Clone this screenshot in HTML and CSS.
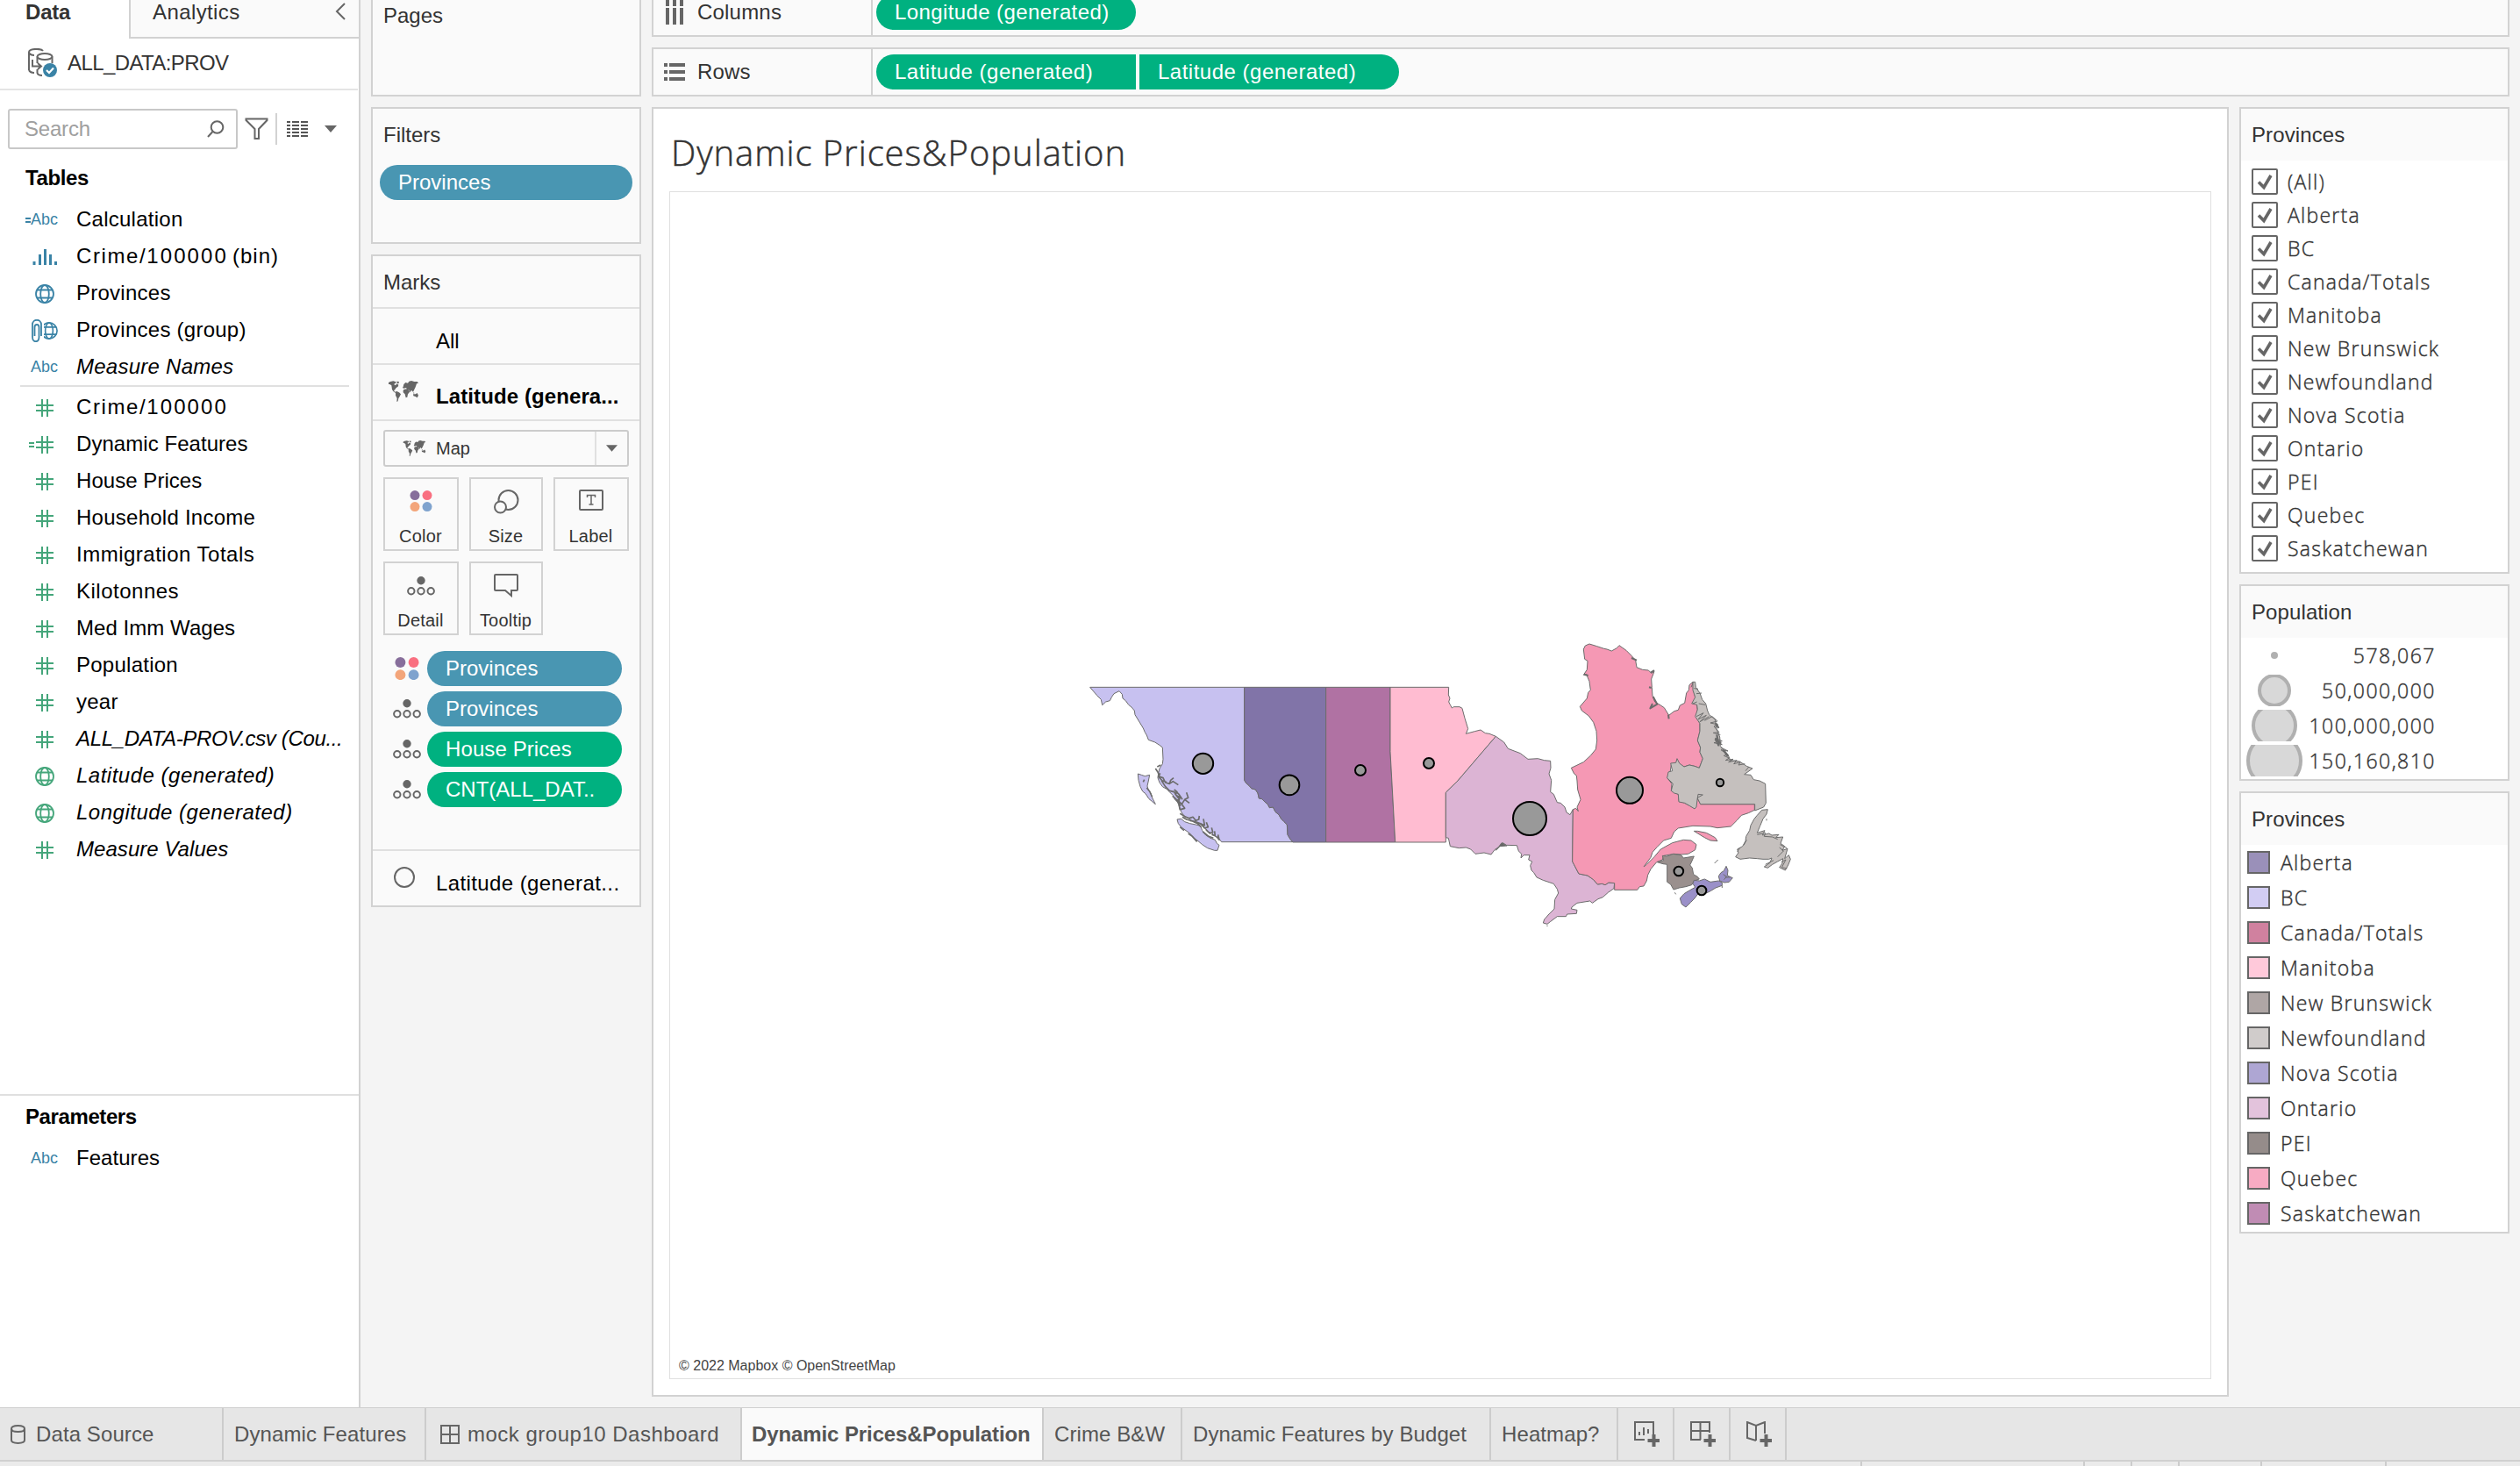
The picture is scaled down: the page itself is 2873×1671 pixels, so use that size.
FILE: index.html
```html
<!DOCTYPE html>
<html lang="en">
<head>
<meta charset="utf-8">
<title>Dynamic Prices&amp;Population</title>
<link rel="stylesheet" href="styles.css">
</head>
<body>
<svg class="defs" width="0" height="0">
  <defs>
    <symbol id="hash" viewBox="0 0 20 20"><path d="M7 0V20M13 0V20M0 7H20M0 13H20" fill="none" stroke="currentColor" stroke-width="2"/></symbol>
    <symbol id="globe" viewBox="0 0 22 22"><g fill="none" stroke="currentColor" stroke-width="1.8"><circle cx="11" cy="11" r="10"/><ellipse cx="11" cy="11" rx="4.8" ry="10"/><path d="M2 6.5H20M2 15.5H20"/></g></symbol>
    <symbol id="dots" viewBox="0 0 26 24"><circle cx="6" cy="5.6" r="5.5" fill="#876e9b"/><circle cx="20" cy="5.6" r="5.5" fill="#f96f80"/><circle cx="6" cy="18.6" r="5.5" fill="#f3a57a"/><circle cx="20" cy="18.6" r="5.5" fill="#7fa3ce"/></symbol>
    <symbol id="detail" viewBox="0 0 32 22"><circle cx="16" cy="4.7" r="4.7" fill="#666"/><g fill="none" stroke="#666" stroke-width="2"><circle cx="4.8" cy="16.8" r="3.7"/><circle cx="16" cy="16.8" r="3.7"/><circle cx="27.2" cy="16.8" r="3.7"/></g></symbol>
    <symbol id="world" viewBox="0 0 102 72"><path fill="#666" d="M0 6 6 3 16 1 26 4 24 8 18 12 24 16 28 10 34 14 32 20 26 24 22 30 18 34 22 38 28 36 36 40 42 46 38 54 34 60 32 70 28 72 29 60 24 50 24 42 16 36 12 30 10 16 4 12 0 12ZM28 2 36 3 34 10 29 8ZM50 20 52 12 58 6 66 8 70 2 78 0 88 3 98 3 102 8 96 10 94 16 92 22 88 30 84 38 78 32 74 40 70 32 64 30 60 24 52 26 48 24ZM52 30 62 28 70 34 72 38 66 46 64 56 59 58 56 46 50 40 50 34ZM84 46 92 46 98 42 102 50 98 58 92 54 85 52ZM84 40 89 42 86 44Z"/></symbol>
    <symbol id="check" viewBox="0 0 30 30"><rect x="1" y="1" width="28" height="28" rx="1" fill="#fff" stroke="#666" stroke-width="2"/><path d="M8 15.5 14 21.5 22 8" fill="none" stroke="#666" stroke-width="3.6"/></symbol>
  </defs>
</svg>
<div class="app">
  <div class="work">
    <aside class="data">
      <div class="tabs"><div class="tab-on">Data</div><div class="tab-off"><span>Analytics</span><svg width="12" height="20" viewBox="0 0 12 20"><path d="M11 1 2 10 11 19" fill="none" stroke="#666" stroke-width="2"/></svg></div></div>
      <div class="source">
        <svg width="34" height="34" viewBox="0 0 34 34"><g fill="none" stroke="#666" stroke-width="2"><ellipse cx="19" cy="9.5" rx="8.5" ry="3.6"/><path d="M27.500 9.500V17M10.500 9.500V17M1 25V4.500C1 0 15 0 17 3M1 5C2 7 5 8 7 8M1 25C2 27 5 28 7 28M5 13V20.500H14M11 17 15 20.500 11 24M10.500 24V28C11 30 13 31 16 31"/></g><circle cx="25" cy="25" r="8" fill="#3a83a6"/><path d="M21 25 24 28 29 22.500" fill="none" stroke="#fff" stroke-width="2.200"/></svg>
        <span>ALL_DATA:PROV</span>
      </div>
      <div class="find">
        <div class="search"><span>Search</span><svg width="20" height="20" viewBox="0 0 20 20"><g fill="none" stroke="#666" stroke-width="2"><circle cx="11.500" cy="8" r="6.800"/><path d="M6.500 13 1 19"/></g></svg></div>
        <svg class="funnel" width="27" height="26" viewBox="0 0 27 26"><path d="M1.500 1.500H25.500V3L16 13V24H11.500V13L1.500 3Z" fill="none" stroke="#666" stroke-width="2"/></svg>
        <i class="bar"></i>
        <svg class="grid" width="24" height="18" viewBox="0 0 24 18"><path d="M0 1H24M0 5H24M0 9H24M0 13H24M0 17H24" stroke="#555" stroke-width="2" stroke-dasharray="4 2 8 2 8 2"/></svg>
        <svg width="14" height="8" viewBox="0 0 14 8"><path d="M0 0H14L7 8Z" fill="#666"/></svg>
      </div>
      <h2>Tables</h2>
      <ul class="fields dim">
        <li><i class="abc"><b></b>Abc</i><span>Calculation</span></li>
        <li><i><svg width="28" height="18" viewBox="0 0 28 18"><path d="M2 14V18M8.500 6V18M14.500 0V18M20.500 6V18M26.500 14V18" stroke="currentColor" stroke-width="3"/></svg></i><span class="slash">Crime/<span class="num">100000</span></span><span class="bin">(bin)</span></li>
        <li><i><svg width="22" height="22"><use href="#globe"/></svg></i><span>Provinces</span></li>
        <li><i class="pair"><svg width="12" height="26" viewBox="0 0 12 26"><path d="M3.500 19V9C3.500 5 8.500 5 8.500 9V20C8.500 27 1 27 1 20V6C1 -1 11 -1 11 6V19" fill="none" stroke="currentColor" stroke-width="1.800"/></svg><svg width="16" height="20" viewBox="4.400 0 17.600 22"><use href="#globe" width="22" height="22"/></svg></i><span>Provinces (group)</span></li>
        <li class="it"><i class="abc">Abc</i><span>Measure Names</span></li>
      </ul>
      <hr>
      <ul class="fields mea">
        <li><i><svg width="20" height="20"><use href="#hash"/></svg></i><span class="slash">Crime/<span class="num">100000</span></span></li>
        <li><i class="pair2"><b></b><svg width="20" height="20"><use href="#hash"/></svg></i><span class="flat">Dynamic Features</span></li>
        <li><i><svg width="20" height="20"><use href="#hash"/></svg></i><span class="flat">House Prices</span></li>
        <li><i><svg width="20" height="20"><use href="#hash"/></svg></i><span>Household Income</span></li>
        <li><i><svg width="20" height="20"><use href="#hash"/></svg></i><span class="open">Immigration Totals</span></li>
        <li><i><svg width="20" height="20"><use href="#hash"/></svg></i><span class="open">Kilotonnes</span></li>
        <li><i><svg width="20" height="20"><use href="#hash"/></svg></i><span class="flat">Med Imm Wages</span></li>
        <li><i><svg width="20" height="20"><use href="#hash"/></svg></i><span>Population</span></li>
        <li><i><svg width="20" height="20"><use href="#hash"/></svg></i><span>year</span></li>
        <li class="it"><i><svg width="20" height="20"><use href="#hash"/></svg></i><span class="tight">ALL_DATA-PROV.csv (Cou...</span></li>
        <li class="it gen"><i><svg width="22" height="22"><use href="#globe"/></svg></i><span>Latitude (generated)</span></li>
        <li class="it gen"><i><svg width="22" height="22"><use href="#globe"/></svg></i><span>Longitude (generated)</span></li>
        <li class="it"><i><svg width="20" height="20"><use href="#hash"/></svg></i><span class="flat">Measure Values</span></li>
      </ul>
      <div class="params">
        <h2>Parameters</h2>
        <ul class="fields dim"><li><i class="abc">Abc</i><span class="flat">Features</span></li></ul>
      </div>
    </aside>

    <section class="cards">
      <div class="card pages"><h3>Pages</h3></div>
      <div class="card filters"><h3>Filters</h3><div class="pill blue">Provinces</div></div>
      <div class="card marks">
        <h3>Marks</h3>
        <div class="layer">All</div>
        <div class="layer on"><svg width="34" height="24"><use href="#world"/></svg><span>Latitude (genera...</span></div>
        <div class="panel">
          <div class="select"><svg width="27" height="18"><use href="#world"/></svg><span>Map</span><i><svg width="13" height="8" viewBox="0 0 14 8"><path d="M0 0H14L7 8Z" fill="#666"/></svg></i></div>
          <div class="buttons">
            <div class="btn"><svg width="26" height="26"><use href="#dots"/></svg>Color</div>
            <div class="btn"><svg width="30" height="28" viewBox="0 0 30 28"><g fill="#fafafa" stroke="#666" stroke-width="2"><circle cx="17.500" cy="12" r="11"/><circle cx="8.500" cy="20" r="6.500"/></g></svg>Size</div>
            <div class="btn"><svg width="28" height="24" viewBox="0 0 28 24"><rect x="1" y="1" width="26" height="22" rx="1" fill="none" stroke="#666" stroke-width="2"/><path d="M9.500 9V6.500H18.500V9M14 6.500V17M11.500 17H16.500" fill="none" stroke="#666" stroke-width="1.500"/></svg>Label</div>
            <div class="btn"><svg class="low" width="32" height="22"><use href="#detail"/></svg>Detail</div>
            <div class="btn"><svg width="28" height="27" viewBox="0 0 28 27"><path d="M2 1H26Q27 1 27 2V18Q27 19 26 19H20V25L13 19H2Q1 19 1 18V2Q1 1 2 1Z" fill="none" stroke="#666" stroke-width="2"/></svg>Tooltip</div>
          </div>
          <div class="enc"><svg width="32" height="26"><use href="#dots"/></svg><div class="pill blue">Provinces</div></div>
          <div class="enc"><svg width="32" height="22"><use href="#detail"/></svg><div class="pill blue">Provinces</div></div>
          <div class="enc"><svg width="32" height="22"><use href="#detail"/></svg><div class="pill green hp">House Prices</div></div>
          <div class="enc"><svg width="32" height="22"><use href="#detail"/></svg><div class="pill green cnt">CNT(ALL_DAT..</div></div>
        </div>
        <div class="layer last"><svg width="24" height="24" viewBox="0 0 24 24"><circle cx="12" cy="12" r="11" fill="none" stroke="#666" stroke-width="2"/></svg><span>Latitude (generat...</span></div>
      </div>
    </section>

    <main>
      <div class="shelf cols">
        <div class="name"><svg width="24" height="28" viewBox="0 0 24 28"><path d="M4 0V7M12 0V7M20 0V7M4 9V28M12 9V28M20 9V28" stroke="#666" stroke-width="4"/></svg>Columns</div>
        <div class="drop"><div class="pill green">Longitude (generated)</div></div>
      </div>
      <div class="shelf rows">
        <div class="name"><svg width="24" height="20" viewBox="0 0 24 20"><path d="M0 2H24M0 10H24M0 18H24" stroke="#666" stroke-width="4" stroke-dasharray="4 2 18 0"/></svg>Rows</div>
        <div class="drop"><div class="pill green lt">Latitude (generated)</div><div class="pill green rt">Latitude (generated)</div></div>
      </div>
      <div class="lower">
        <div class="sheet">
          <h1>Dynamic Prices&amp;Population</h1>
          <div class="frame">
            <svg class="map" width="1756" height="1325" viewBox="0 0 1756 1325">
              <g transform="translate(456 501) scale(.33333)" stroke="#6b6b6b" stroke-width="3" stroke-linejoin="round">
                <path fill="#c7c1f0" d="M68 190H596V508L602 518 612 526 620 536 634 540 642 552 646 570 656 572 666 582 676 590 682 602 694 600 702 616 714 626 722 640 732 650 742 660 744 694 752 708 762 719H518L508 706 496 700 484 688 470 684 462 672 452 660 440 656 424 652 408 640 390 630 380 616 374 600 370 584 358 574 352 560 340 548 330 538 316 530 306 516 300 500 302 484 306 468 316 452 318 436 316 396 306 388 290 378 268 370 262 354 256 344 250 330 222 284 220 270 210 258 200 250 190 236 180 228 178 214 168 203 150 212 142 224 136 236 122 240 110 251 106 232 92 218 80 204Z"/>
                <path fill="#c7c1f0" d="M232 486 244 490 256 494 272 490 268 510 264 528 268 542 276 552 282 570 292 590 280 580 270 572 258 554 248 546 240 530 234 508Z"/>
                <path fill="#c7c1f0" d="M366 642 380 640 392 650 410 656 430 660 446 664 452 680 464 696 480 706 496 712 502 724 510 730 504 748 494 748 470 740 452 728 438 716 424 706 410 690 396 680 380 668 370 656Z"/>
                <path fill="none" stroke-width="5" d="M292 468 300 480 306 496 318 500 326 516 340 520 344 508 354 500M340 520 352 512 370 524M312 508 326 530 340 544 356 548 364 560 376 566 372 580 382 590 392 604 378 608M350 562 362 572 372 590 376 610M382 590 392 574 404 568 398 550M392 574 408 586M384 574 372 556 360 544M376 622 392 632 408 638 420 634 430 646 440 642 442 630M410 646 430 650 446 656 460 662 456 640M446 656 460 672 472 668 466 652M464 676 478 690 488 686 484 670M484 694 496 698 494 682M500 700 510 712 506 694M454 684 474 700 490 706M376 668 390 680M404 690 418 700 434 718M254 506 250 514M262 534 272 546 280 564M308 484 302 496 316 510 330 514M356 540 366 548 360 556 374 574 366 576 378 596M298 462 310 456M384 634 398 642 420 648 436 656 448 668"/>
                <path fill="#8174a8" d="M596 190H875V720H762L752 708 744 694 742 660 732 650 722 640 714 626 702 616 694 600 682 602 676 590 666 582 656 572 646 570 642 552 634 540 620 536 612 526 602 518 596 508Z"/>
                <path fill="#b072a3" d="M875 190H1095V410L1112 720H875Z"/>
                <path fill="#ffbcd1" d="M1095 190H1295L1294 216 1299 228 1295 240 1300 250 1306 261 1312 257H1332L1341 262 1350 296 1361 332 1354 349 1384 341 1404 336 1420 347 1434 349 1456 358 1326 510 1285 550V720H1112L1095 410Z"/>
                <g transform="translate(1230)">
                  <path fill="#dcb4d4" d="M226 358 254 378 268 400 310 416 336 436 370 434 392 440 413 442 414 466 408 486 416 508 413 548 424 556 436 584 448 586 462 600 468 618 480 626 490 608 488 786 510 828 540 834 560 848 574 864 590 862 600 866 612 858 632 860 630 878 610 892 592 908 576 914 556 928 548 921 504 928 486 942 484 948 504 952 502 964 470 966 466 974 436 974 412 992 402 1000 388 996 392 984 408 966 414 960 426 948 428 916 440 894 436 880 424 862 388 850 366 840 356 824 348 816 344 800 350 786 338 780 342 764 322 764 312 774 314 760 304 750 298 731 262 730 250 722 236 736 222 746 210 762 186 756 156 760 140 744 124 738 100 740 70 734 64 706 55 704V550L96 510Z"/>
                  <path fill="#f598b4" d="M526 60 532 48 546 42 572 50 596 58 606 60 622 66 640 56 648 47 672 64 690 82 704 98 708 122 728 130 748 132 758 142 768 136 758 162 760 190 762 220 770 240 790 252 802 260 818 286 836 272 850 268 856 252 872 244 878 210 886 200 888 182 900 172 902 200 908 224 914 250 916 270 912 290 924 314 924 340 916 372 926 396 924 412 934 434 922 466 906 460 888 456 870 462 850 452 826 456 822 482 812 500 828 520 826 544 850 556 852 578 872 586 890 596 906 604 916 570 926 590H1111V610L1090 620 1066 628 1050 646 1030 666 984 671 960 666 900 664 850 672 836 684 826 706 800 714 778 736 762 754 756 772 732 804 742 796 768 770 790 744 830 722 868 712 894 714 912 728 908 746 884 760 860 762 836 760 800 766 796 780 776 788 756 812 746 832 742 852 732 870 718 872 710 883H632V860L612 858 600 866 590 862 574 864 560 848 540 834 510 828 488 786 490 608 500 604 508 614 504 600 516 574 506 540 504 510 502 492 494 486 484 466 526 446 550 424 568 402 572 372 570 340 560 310 544 288 520 270 514 256 538 228 542 208 550 200 546 170 536 146 526 148 538 130 540 100 530 94Z"/>
                  <path fill="#f598b4" d="M904 682 916 682 946 688 976 704 984 716 960 714 940 704Z"/>
                  <path fill="#c5c0be" d="M900 172 908 172 910 190 924 210 932 232 944 246 950 270 956 284 976 300 980 330 992 360 994 392 1020 420 1028 440 1060 444 1084 460 1104 468 1076 488 1098 490 1108 506 1128 510 1148 520 1150 586 1142 600 1112 612V590H926L916 570 918 556 934 558 916 568 912 600 906 606 890 596 872 586 852 582 850 556 836 552 826 544 832 520 812 500 816 480 830 476 824 450 842 448 846 434 854 450 870 462 888 456 906 460 922 466 934 434 924 412 926 396 916 372 924 340 924 314 908 290 916 266 914 250 896 246 908 224 900 200Z"/>
                  <path fill="none" d="M912 290 936 278 918 300 946 286 924 308 956 290M940 304 966 290 984 306 960 312 986 318 972 324 990 344 970 346 994 352M976 364 1000 374 972 380 1000 386 976 370 988 392M996 396 1020 408 996 404 1018 420 1006 424 1024 432 1012 440 1038 436 1022 446 1050 440 1040 452 1062 446 1056 456 1078 452M1092 462 1080 476M900 176 894 190M904 194 918 196M912 212 930 210M900 246 914 240M920 246 942 250"/>
                  <path fill="none" stroke-width="7" d="M978 312 988 330M976 366 996 382M982 352 988 390M1004 404 1020 426"/>
                  <path fill="#c5c0be" d="M1156 608 1136 610 1120 628 1110 640 1098 662 1094 680 1082 700 1080 716 1070 734 1052 744 1056 756 1046 770 1062 778 1094 774 1120 776 1140 778 1160 778 1170 774 1164 790 1144 804 1156 808 1172 796 1190 786 1208 776 1206 792 1196 806 1216 816 1226 798 1234 778 1228 764 1214 776 1224 742 1206 748 1214 734 1200 724 1208 702 1184 704 1194 694 1170 696 1160 690 1138 696 1146 680 1120 688 1130 664 1140 640 1152 624Z"/>
                  <path fill="none" d="M1120 694 1148 688 1144 700 1172 702 1190 710M1198 728 1222 740M1196 738 1210 750 1190 770M1202 788 1218 780 1204 806 1222 810M1148 796 1176 782M1062 738 1052 752M1084 712 1074 730"/>
                  <path fill="#9a908e" d="M778 788 800 782 796 766 812 768 832 760 846 762 860 764 868 774 904 768 896 786 890 798 898 808 902 830 916 838 922 846 904 852 896 866 876 872 854 876 834 882 824 864 812 856 812 796 798 794Z"/>
                  <path fill="#9a90c8" d="M904 850 922 852 940 846 960 856 988 852 1000 858 1000 868 978 876 962 886 946 894 918 896 906 912 892 926 876 942 862 932 856 912 870 896 890 884 908 874 900 862ZM1014 802 1020 816 1018 834 1036 842 1024 856 1008 858 992 852 988 836 996 824 1006 818Z"/>
                  <path fill="none" d="M974 792 986 780M1010 840 1028 840M1004 830 1016 838 1006 848M838 892 842 898M402 1004V1008M1000 868V876M1152 640V646"/>
                  <path fill="#666" d="M246 722 264 732 240 734 226 748 236 736Z"/>
                  <path fill="none" stroke-width="6" d="M750 190 758 192M764 222 778 248 754 262 762 246M816 284 818 298M690 90 708 98M528 146 542 150M756 140 768 132"/>
                </g>
              </g>
              <g transform="translate(456 501) scale(.33333)" fill="#999" stroke="#000" stroke-width="6">
                <circle cx="454.500" cy="451" r="35"/><circle cx="750" cy="524.500" r="34"/><circle cx="993" cy="474" r="18"/><circle cx="1227" cy="450" r="18"/><circle cx="1572" cy="639" r="57"/><circle cx="1914" cy="542.500" r="45"/><circle cx="2223" cy="516" r="12.500"/><circle cx="2081.500" cy="819" r="16"/><circle cx="2160" cy="885" r="16"/>
              </g>
            </svg>
            <p>© 2022 Mapbox © OpenStreetMap</p>
          </div>
        </div>
        <aside class="legends">
          <div class="legend f">
            <h3>Provinces</h3>
            <ul>
              <li><svg><use href="#check"/></svg>(All)</li><li><svg><use href="#check"/></svg>Alberta</li><li><svg><use href="#check"/></svg>BC</li><li><svg><use href="#check"/></svg>Canada/Totals</li><li><svg><use href="#check"/></svg>Manitoba</li><li><svg><use href="#check"/></svg>New Brunswick</li><li><svg><use href="#check"/></svg>Newfoundland</li><li><svg><use href="#check"/></svg>Nova Scotia</li><li><svg><use href="#check"/></svg>Ontario</li><li><svg><use href="#check"/></svg>PEI</li><li><svg><use href="#check"/></svg>Quebec</li><li><svg><use href="#check"/></svg>Saskatchewan</li>
            </ul>
          </div>
          <div class="legend s">
            <h3>Population</h3>
            <ul>
              <li><svg viewBox="-34 -18 68 36"><circle class="dot" r="4"/></svg><span>578,067</span></li>
              <li><svg viewBox="-34 -18 68 36"><circle r="17"/></svg><span>50,000,000</span></li>
              <li><svg viewBox="-34 -18 68 36"><circle r="24"/></svg><span>100,000,000</span></li>
              <li><svg viewBox="-34 -18 68 36"><circle r="30"/></svg><span>150,160,810</span></li>
            </ul>
          </div>
          <div class="legend c">
            <h3>Provinces</h3>
            <ul>
              <li><i class="ab"></i>Alberta</li><li><i class="bc"></i>BC</li><li><i class="ca"></i>Canada/Totals</li><li><i class="mb"></i>Manitoba</li><li><i class="nb"></i>New Brunswick</li><li><i class="nl"></i>Newfoundland</li><li><i class="ns"></i>Nova Scotia</li><li><i class="ont"></i>Ontario</li><li><i class="pe"></i>PEI</li><li><i class="qc"></i>Quebec</li><li><i class="sk"></i>Saskatchewan</li>
            </ul>
          </div>
        </aside>
      </div>
    </main>
  </div>

  <nav>
    <div class="w1"><svg width="17" height="22" viewBox="0 0 17 22"><path d="M1 4.500V17.500C1 22 16 22 16 17.500V4.500M8.500 1C18.500 1 18.500 8 8.500 8S-1.500 1 8.500 1Z" fill="none" stroke="#666" stroke-width="2"/></svg>Data Source</div>
    <div class="w2">Dynamic Features</div>
    <div class="w3"><svg width="22" height="22" viewBox="0 0 22 22"><path d="M1 1H21V21H1ZM11 1V21M1 11H21" fill="none" stroke="#666" stroke-width="2"/></svg>mock group10 Dashboard</div>
    <div class="w4 on">Dynamic Prices&amp;Population</div>
    <div class="w5">Crime B&amp;W</div>
    <div class="w6">Dynamic Features by Budget</div>
    <div class="w7">Heatmap?</div>
    <div class="w8"><svg width="29" height="29" viewBox="0 0 29 29"><g fill="none" stroke="#666" stroke-width="2"><path d="M12 21H1V1H22V16M6 16V12M11 16V7M16 14V9"/><path stroke-width="4" d="M22.500 15V29M15.500 22H29"/></g></svg></div>
    <div class="w8"><svg width="29" height="29" viewBox="0 0 29 29"><g fill="none" stroke="#666" stroke-width="2"><path d="M12 21H1V1H22V13M11.500 1V21M1 11H22"/><path stroke-width="4" d="M22.500 15V29M15.500 22H29"/></g></svg></div>
    <div class="w8"><svg width="29" height="29" viewBox="0 0 29 29"><g fill="none" stroke="#666" stroke-width="2"><path d="M11 22 1 19V1L11 5 21 1V14M11 5V22"/><path stroke-width="4" d="M22.500 15V29M15.500 22H29"/></g></svg></div>
  </nav>
  <footer><i></i><i></i><i></i><i></i><i></i><i></i></footer>
</div>
</body>
</html>
```

FILE: styles.css
```css
* { box-sizing: border-box; margin: 0; padding: 0; }
body { width: 2873px; height: 1671px; overflow: hidden; background: #f4f4f4; font: 24px/42px "Liberation Sans", Arial, sans-serif; color: #333; }
ul { list-style: none; }
svg { display: block; flex: none; }
i { font-style: normal; }
.defs { position: absolute; }
.app { display: flex; flex-direction: column; height: 1671px; white-space: nowrap; }
.work { display: flex; height: 1604px; }

/* Data pane */
.data { display: flex; flex-direction: column; width: 411px; background: #fff; border-right: 2px solid #d2d2d2; color: #000; letter-spacing: .25px; }
.tabs { display: flex; height: 44px; color: #333; line-height: 28px; }
.tab-on { width: 147px; padding-left: 29px; font-weight: bold; letter-spacing: -.2px; }
.tab-off { display: flex; flex: 1; justify-content: space-between; padding: 0 15px 0 25px; background: #fafafa; border: solid #d2d2d2; border-width: 0 0 2px 2px; letter-spacing: .4px; }
.tab-off svg { margin-top: 3px; }
.source { display: flex; align-items: center; gap: 11px; width: 408px; height: 59px; padding: 0 0 2px 32px; border-bottom: 2px solid #e4e4e4; color: #333; letter-spacing: -.6px; }
.find { display: flex; align-items: center; height: 46px; margin: 21px 0 17px 9px; }
.search { display: flex; align-items: center; justify-content: space-between; width: 262px; height: 46px; padding: 0 13px 0 17px; border: 2px solid #c8c8c8; border-radius: 3px; color: #a0a0a0; letter-spacing: -.2px; }
.funnel { margin-left: 8px; }
.bar { width: 2px; height: 36px; margin: 0 11px 0 8px; background: #d2d2d2; }
.grid { margin-right: 19px; }
h2 { height: 41px; padding-left: 29px; font-size: 24px; line-height: 31px; letter-spacing: -.4px; }
.fields li { display: flex; height: 42px; line-height: 43px; }
.fields i { display: flex; align-items: center; justify-content: center; width: 102px; height: 42px; padding-top: 3px; margin-right: -15px; }
.fields .abc { justify-content: flex-end; padding-right: 36px; font-size: 18px; letter-spacing: 0; }
.fields .pair { gap: 2px; }
.fields b { width: 6px; height: 6px; border: solid; border-width: 2px 0; }
.fields .pair2 { gap: 2px; padding-right: 8px; }
.slash { letter-spacing: 1.6px; }
.num { letter-spacing: 2.1px; }
.bin { margin-left: 5px; letter-spacing: 1px; }
.flat { letter-spacing: .05px; }
.open { letter-spacing: .5px; }
.tight { letter-spacing: -.35px; }
.dim i { color: #3a83a6; }
.mea i { color: #45a67b; }
.it { font-style: italic; }
.gen { letter-spacing: .5px; }
.data hr { height: 2px; margin: 1px 11px 1px 23px; border: 0; background: #e0e0e0; }
.params { margin-top: auto; height: 357px; border-top: 2px solid #e0e0e0; padding-top: 8px; }

/* Cards */
.cards { display: flex; flex-direction: column; gap: 12px; width: 308px; margin-left: 12px; }
.card { border: 2px solid #d2d2d2; background: #fafafa; color: #333; }
h3 { font-size: 24px; font-weight: normal; line-height: 60px; height: 60px; padding-left: 12px; }
.pages { height: 110px; border-top: 0; }
.pages h3 { line-height: 36px; }
.filters { height: 156px; }
.pill { height: 40px; padding-left: 21px; border-radius: 20px; color: #fff; line-height: 40px; }
.blue { background: #4996b2; }
.green { background: #00b180; letter-spacing: .4px; }
.filters .pill { margin: 4px 8px; }
.marks { height: 744px; }
.marks h3 { height: 58px; }
.layer { display: flex; height: 64px; border-top: 2px solid #e0e0e0; padding-left: 72px; line-height: 73px; color: #000; }
.layer.on { padding-left: 18px; font-weight: bold; line-height: 72px; letter-spacing: .1px; }
.layer.on svg { margin: 18px 20px 0 0; }
.layer.last { padding-left: 24px; line-height: 74px; letter-spacing: .4px; }
.layer.last svg { margin: 18px 24px 0 0; }
.panel { height: 490px; padding: 10px 12px 0; border-top: 2px solid #e0e0e0; }
.select { display: flex; align-items: center; height: 42px; padding-left: 20px; border: 2px solid #ccc; border-radius: 3px; font-size: 20px; }
.select span { margin-left: 11px; flex: 1; }
.select i { display: flex; align-items: center; justify-content: center; width: 37px; height: 38px; border-left: 2px solid #e0e0e0; }
.buttons { display: grid; grid-template-columns: 86px 84px 86px; gap: 12px; margin: 12px 0 18px; }
.btn { display: flex; flex-direction: column; align-items: center; justify-content: space-between; height: 84px; padding: 12px 1px 1px 0; border: 2px solid #d2d2d2; font-size: 20px; line-height: 28px; letter-spacing: .2px; }
.btn .low { margin-top: 3px; }
.enc { display: flex; align-items: center; gap: 7px; height: 40px; margin: 0 8px 6px 11px; }
.enc .pill { flex: 1; }
.pill.hp { letter-spacing: .1px; }
.pill.cnt { letter-spacing: 0; }

/* Shelves */
main { display: flex; flex-direction: column; width: 2118px; margin-left: 12px; }
.shelf { display: flex; border: 2px solid #d2d2d2; background: #fafafa; }
.name { display: flex; align-items: center; gap: 14px; width: 250px; padding-left: 12px; border-right: 2px solid #d2d2d2; letter-spacing: .2px; }
.drop { display: flex; gap: 4px; padding: 6px 4px; }
.drop .pill { width: 296px; }
.cols { height: 42px; border-top: 0; margin-bottom: 12px; }
.cols .name { padding-bottom: 12px; line-height: 28px; }
.cols .drop { padding-top: 0; margin-top: -6px; }
.rows { height: 56px; margin-bottom: 12px; }
.drop .lt { border-radius: 20px 0 0 20px; letter-spacing: .5px; }
.drop .rt { border-radius: 0 20px 20px 0; letter-spacing: .5px; }

/* Worksheet */
.lower { display: flex; gap: 12px; }
.sheet { width: 1798px; height: 1470px; padding: 0 18px; border: 2px solid #d2d2d2; background: #fff; }
h1 { height: 94px; padding-left: 2px; font: 300 40px/99px "Open Sans", "Noto Sans", sans-serif; letter-spacing: .95px; -webkit-text-stroke: .5px; }
.frame { height: 1354px; border: 1px solid #e0e0e0; }
.frame p { padding-left: 10px; font-size: 16px; line-height: 26px; color: #444; }

/* Legends */
.legends { display: flex; flex-direction: column; gap: 12px; width: 308px; }
.legend { border: 2px solid #d2d2d2; background: #fff; font: 300 23px/38px "Open Sans", "Noto Sans", sans-serif; letter-spacing: 1.25px; }
.legend ul { -webkit-text-stroke: .4px; }
.legend h3 { height: 59px; background: #fafafa; font-family: "Liberation Sans", sans-serif; letter-spacing: .1px; line-height: 60px; }
.legend li { display: flex; align-items: center; }
.f { height: 532px; }
.f ul { padding: 5px 12px; }
.f li { height: 38px; gap: 11px; }
.f svg { width: 30px; height: 30px; }
.s { height: 224px; }
.s li { height: 40px; padding-left: 4px; }
.s li svg { width: 68px; height: 36px; fill: #d8d8d8; stroke: #b0b0b0; stroke-width: 4px; overflow: hidden; }
.s .dot { fill: #b0b0b0; stroke: none; }
.s li span { width: 150px; text-align: right; letter-spacing: 1.5px; }
.c { height: 504px; }
.c li { height: 40px; padding-left: 7px; gap: 12px; }
.c i { width: 26px; height: 26px; border: 2px solid #666; }
.ab { background: #9a90b9; }
.bc { background: #d2cdf3; }
.ca { background: #d0819f; }
.mb { background: #ffc9da; }
.nb { background: #afa6a5; }
.nl { background: #d0cccb; }
.ns { background: #aea6d3; }
.ont { background: #e3c3dc; }
.pe { background: #958c8a; }
.qc { background: #f7abc3; }
.sk { background: #c08cb4; }

/* Sheet tabs */
nav { display: flex; height: 62px; border: solid #d0d0d0; border-width: 1px 0 2px; background: #e6e6e6; color: #555; line-height: 58px; }
nav div { display: flex; align-items: center; padding-left: 12px; border-right: 2px solid #ccc; letter-spacing: .1px; }
nav .on { padding-left: 11px; background: #fafafa; font-weight: bold; letter-spacing: -.1px; }
.w1 { width: 255px; gap: 12px; }
.w2 { width: 231px; }
.w3 { width: 360px; gap: 9px; }
nav .w3 { padding-left: 16px; letter-spacing: .5px; }
.w4 { width: 344px; }
.w5 { width: 158px; }
.w6 { width: 352px; }
.w7 { width: 145px; }
.w8 { width: 64px; }
nav .w8 { padding-left: 18px; }

/* Status bar */
footer { display: grid; grid-template-columns: 2123px 254px 54px 54px 94px 142px; flex: 1; background: #ebebeb; }
footer i { border-right: 2px solid #ccc; }
```
